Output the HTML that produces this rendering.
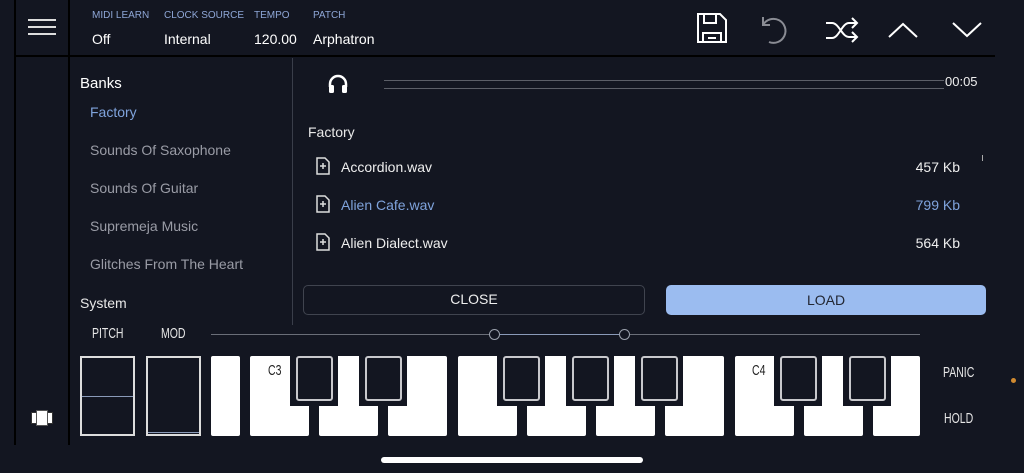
<!DOCTYPE html>
<html><head><meta charset="utf-8"><style>
*{margin:0;padding:0;box-sizing:border-box}
body{width:1024px;height:473px;background:#131621;position:relative;overflow:hidden;font-family:"Liberation Sans",sans-serif;color:#fff}
.a{position:absolute;white-space:nowrap}
.lbl{font-size:10px;color:#8ea6d6;top:10px}
.val{font-size:14px;color:#fff;top:31px}
.bank{font-size:14px;color:#9a9ca6;left:90px}
.file{font-size:14px;left:341px}
.size{font-size:14px;right:64px}
.nar{font-size:15px;color:#e6e6e6;transform:scaleX(0.7);transform-origin:left top}
.wk{position:absolute;top:356px;height:80px;width:59px;background:#fff;border-radius:2px}
.cut{position:absolute;top:356px;height:50px;width:48px;background:#131621}
.bk{position:absolute;top:356px;height:45px;width:37px;border:2px solid #c8c8cc;border-radius:3px;background:#131621}
</style></head><body>
<div class="a" style="left:14px;top:0;width:2px;height:445px;background:#000"></div>
<div class="a" style="left:68px;top:0;width:2px;height:445px;background:#000"></div>
<div class="a" style="left:14px;top:55px;width:981px;height:2px;background:#000"></div>
<div class="a" style="left:292px;top:58px;width:1px;height:267px;background:#3a3e4a"></div>

<div class="a" style="left:28px;top:19px;width:28px;height:1.5px;background:#ddd"></div>
<div class="a" style="left:28px;top:26px;width:28px;height:1.5px;background:#ddd"></div>
<div class="a" style="left:28px;top:33px;width:28px;height:1.5px;background:#ddd"></div>

<div class="a lbl" style="left:92px">MIDI LEARN</div>
<div class="a lbl" style="left:164px">CLOCK SOURCE</div>
<div class="a lbl" style="left:254px">TEMPO</div>
<div class="a lbl" style="left:313px">PATCH</div>
<div class="a val" style="left:92px">Off</div>
<div class="a val" style="left:164px">Internal</div>
<div class="a val" style="left:254px">120.00</div>
<div class="a val" style="left:313px">Arphatron</div>

<svg class="a" style="left:690px;top:8px" width="300" height="42" fill="none" stroke-width="2">
<g stroke="#fff"><path d="M8 6h22l6 6v22H8z"/><path d="M14 6v9h12V6"/><path d="M13 34v-9h18v9"/><path d="M18 30h8"/></g>
<g stroke="#8a8c94"><path d="M73 9v8h7"/><path d="M73 17a12 12 0 1 1 6 17"/></g>
<g stroke="#fff"><path d="M136 15h6c7 0 10 14 17 14h7"/><path d="M136 30h6c7 0 10-15 17-15h7"/><path d="M162 10l5 5-5 5M162 24l5 5-5 5"/>
<path d="M199 29l14-13 14 13"/><path d="M263 15l14 13 14-13"/></g>
</svg>

<svg class="a" style="left:327px;top:74px" width="22" height="20"><path d="M3 13v-3a8 8 0 0 1 16 0v3" stroke="#fff" stroke-width="2.5" fill="none"/><rect x="2" y="11" width="5" height="8" rx="1.5" fill="#fff"/><rect x="15" y="11" width="5" height="8" rx="1.5" fill="#fff"/></svg>
<div class="a" style="left:384px;top:80px;width:560px;height:1px;background:#5c5f68"></div>
<div class="a" style="left:384px;top:88px;width:560px;height:1px;background:#5c5f68"></div>
<div class="a" style="left:945px;top:74px;font-size:13px;color:#eee">00:05</div>

<div class="a" style="left:80px;top:75px;font-size:15px">Banks</div>
<div class="a bank" style="top:104px;color:#7fa3dc">Factory</div>
<div class="a bank" style="top:142px">Sounds Of Saxophone</div>
<div class="a bank" style="top:180px">Sounds Of Guitar</div>
<div class="a bank" style="top:218px">Supremeja Music</div>
<div class="a bank" style="top:256px">Glitches From The Heart</div>
<div class="a" style="left:80px;top:295px;font-size:14px;color:#e8e8e8">System</div>

<div class="a" style="left:308px;top:124px;font-size:14px;color:#e8e8e8">Factory</div>
<svg class="a" style="left:315px;top:157px" width="16" height="100" fill="none" stroke="#ddd" stroke-width="1.5">
<g id="f"><path d="M2 1h8l4 4v12H2z"/><path d="M8 6v6M5 9h6"/></g>
<use href="#f" y="38"/><use href="#f" y="76"/></svg>
<div class="a file" style="top:159px;color:#eee">Accordion.wav</div>
<div class="a file" style="top:197px;color:#7fa3dc">Alien Cafe.wav</div>
<div class="a file" style="top:235px;color:#eee">Alien Dialect.wav</div>
<div class="a size" style="top:159px;color:#eee">457 Kb</div>
<div class="a size" style="top:197px;color:#7fa3dc">799 Kb</div>
<div class="a size" style="top:235px;color:#eee">564 Kb</div>
<div class="a" style="left:982px;top:155px;width:1px;height:6px;background:#aaa"></div>

<div class="a" style="left:303px;top:285px;width:342px;height:30px;border:1.5px solid #40444f;border-radius:5px;text-align:center;line-height:27px;font-size:14px;color:#eee">CLOSE</div>
<div class="a" style="left:666px;top:285px;width:320px;height:30px;background:#9bbcf0;border-radius:5px;text-align:center;line-height:30px;font-size:14px;color:#222733">LOAD</div>

<div class="a nar" style="left:92px;top:325px">PITCH</div>
<div class="a nar" style="left:161px;top:325px">MOD</div>
<div class="a" style="left:211px;top:334px;width:709px;height:1px;background:#6a6e78"></div>
<div class="a" style="left:494px;top:334px;width:130px;height:1px;background:#8a9ab8"></div>
<div class="a" style="left:489px;top:329px;width:11px;height:11px;border:1.5px solid #9aa0ac;border-radius:50%;background:#131621"></div>
<div class="a" style="left:619px;top:329px;width:11px;height:11px;border:1.5px solid #9aa0ac;border-radius:50%;background:#131621"></div>

<div class="a" style="left:80px;top:356px;width:55px;height:80px;border:2px solid #ddd"></div>
<div class="a" style="left:82px;top:396px;width:51px;height:1px;background:#8a9ab8"></div>
<div class="a" style="left:146px;top:356px;width:55px;height:80px;border:2px solid #ddd"></div>
<div class="a" style="left:148px;top:432px;width:51px;height:1px;background:#8a9ab8"></div>

<div class="wk" style="left:211px;width:29px"></div>
<div class="wk" style="left:250px"></div><div class="wk" style="left:319px"></div><div class="wk" style="left:388px"></div>
<div class="wk" style="left:458px"></div><div class="wk" style="left:527px"></div><div class="wk" style="left:596px"></div><div class="wk" style="left:665px"></div>
<div class="wk" style="left:735px"></div><div class="wk" style="left:804px"></div><div class="wk" style="left:873px;width:47px"></div>
<div class="cut" style="left:290px"></div><div class="cut" style="left:359px"></div>
<div class="cut" style="left:497px"></div><div class="cut" style="left:566px"></div><div class="cut" style="left:635px"></div>
<div class="cut" style="left:774px"></div><div class="cut" style="left:843px"></div>
<div class="bk" style="left:296px"></div><div class="bk" style="left:365px"></div>
<div class="bk" style="left:503px"></div><div class="bk" style="left:572px"></div><div class="bk" style="left:641px"></div>
<div class="bk" style="left:780px"></div><div class="bk" style="left:849px"></div>
<div class="a nar" style="left:268px;top:362px;color:#222">C3</div>
<div class="a nar" style="left:752px;top:362px;color:#222">C4</div>

<div class="a nar" style="left:943px;top:364px">PANIC</div>
<div class="a nar" style="left:944px;top:410px">HOLD</div>
<div class="a" style="left:1011px;top:378px;width:5px;height:5px;border-radius:50%;background:#d08a30"></div>

<div class="a" style="left:31px;top:412px;width:22px;height:12px;background:#fff;border:1px solid #333"></div>
<div class="a" style="left:36px;top:410px;width:12px;height:16px;background:#fff;border:1px solid #555"></div>

<div class="a" style="left:381px;top:457px;width:262px;height:6px;border-radius:3px;background:#fff"></div>
</body></html>
